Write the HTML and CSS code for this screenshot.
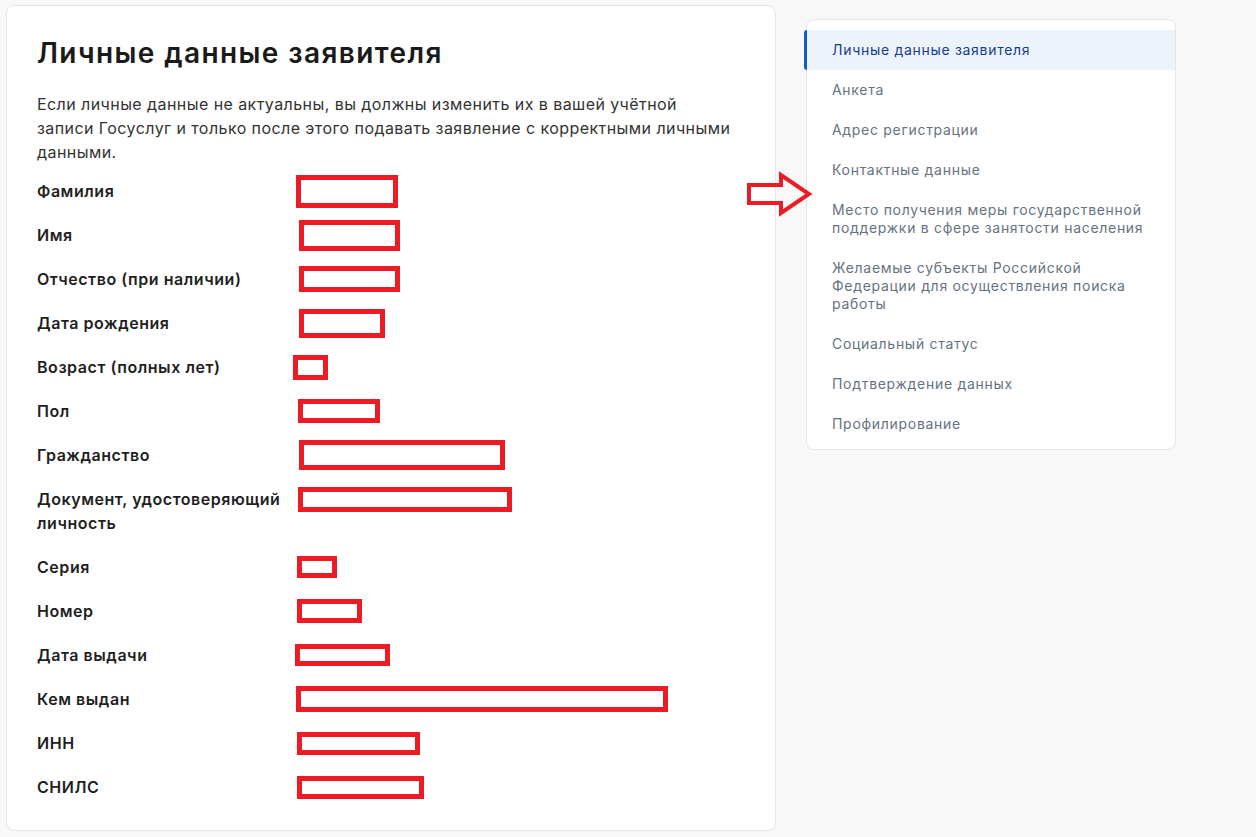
FILE: index.html
```html
<!DOCTYPE html>
<html lang="ru">
<head>
  <meta charset="UTF-8" />
  <title>Личные данные заявителя</title>
  <link rel="stylesheet" href="styles.css">
</head>
<body>
  <div class="page">
    <div class="card">
      <h1>Личные данные заявителя</h1>
      <p class="hint">Если личные данные не актуальны, вы должны изменить их в вашей учётной<br>записи Госуслуг и только после этого подавать заявление с корректными личными данными.</p>

      <div class="fields">
        <div class="label">Фамилия</div>
        <div class="value"><span class="mask" style="width:102px;height:33px;margin-left:0"></span></div>

        <div class="label">Имя</div>
        <div class="value"><span class="mask" style="width:101px;height:31px;margin-left:3px"></span></div>

        <div class="label">Отчество (при наличии)</div>
        <div class="value"><span class="mask" style="width:101px;height:26px;margin-left:3px"></span></div>

        <div class="label">Дата рождения</div>
        <div class="value"><span class="mask" style="width:86px;height:29px;margin-left:3px"></span></div>

        <div class="label">Возраст (полных лет)</div>
        <div class="value"><span class="mask" style="width:35px;height:25px;margin-left:-3px"></span></div>

        <div class="label">Пол</div>
        <div class="value"><span class="mask" style="width:82px;height:24px;margin-left:2px"></span></div>

        <div class="label">Гражданство</div>
        <div class="value"><span class="mask" style="width:206px;height:30px;margin-left:3px"></span></div>

        <div class="label">Документ, удостоверяющий личность</div>
        <div class="value"><span class="mask" style="width:214px;height:25px;margin-left:2px"></span></div>

        <div class="label">Серия</div>
        <div class="value"><span class="mask" style="width:40px;height:22px;margin-left:1px"></span></div>

        <div class="label">Номер</div>
        <div class="value"><span class="mask" style="width:65px;height:24px;margin-left:1px"></span></div>

        <div class="label">Дата выдачи</div>
        <div class="value"><span class="mask" style="width:95px;height:22px;margin-left:-1px"></span></div>

        <div class="label">Кем выдан</div>
        <div class="value"><span class="mask" style="width:372px;height:26px;margin-left:0"></span></div>

        <div class="label">ИНН</div>
        <div class="value"><span class="mask" style="width:123px;height:23px;margin-left:1px"></span></div>

        <div class="label">СНИЛС</div>
        <div class="value"><span class="mask" style="width:127px;height:23px;margin-left:1px"></span></div>
      </div>
    </div>

    <div class="side">
      <svg class="pointer" width="70" height="46" viewBox="0 0 70 46">
        <polygon points="4,14 36,14 36,4 64,23 36,42 36,32 4,32" fill="none" stroke="#ed1c24" stroke-width="4" stroke-linejoin="miter"/>
      </svg>
      <ul class="steps">
        <li class="active">Личные данные заявителя</li>
        <li>Анкета</li>
        <li>Адрес регистрации</li>
        <li>Контактные данные</li>
        <li>Место получения меры государственной поддержки в сфере занятости населения</li>
        <li>Желаемые субъекты Российской Федерации для осуществления поиска работы</li>
        <li>Социальный статус</li>
        <li>Подтверждение данных</li>
        <li>Профилирование</li>
      </ul>
    </div>
  </div>
</body>
</html>
```

FILE: styles.css
```css
body {
  margin: 0;
  font-family: Inter, "Open Sans", sans-serif;
  background-color: #f8f8f8;
  color: #1f1f1f;
}
.page {
  display: flex;
  align-items: flex-start;
  gap: 30px;
  padding: 5px 0 0 6px;
}
.card {
  box-sizing: border-box;
  width: 770px;
  height: 826px;
  background-color: #fff;
  border: 1px solid #e6e6e6;
  border-radius: 8px;
  padding: 29px 10px 0 30px;
}
h1 {
  margin: 0 0 21px;
  font-size: 28px;
  line-height: 36px;
  font-weight: 600;
  color: #1a1a1a;
  letter-spacing: 1.4px;
}
.hint {
  margin: 0 0 15px;
  font-size: 16px;
  line-height: 24px;
  color: #333;
  letter-spacing: 0.43px;
  max-width: 730px;
}
.fields {
  display: grid;
  grid-template-columns: 250px 1fr;
  column-gap: 9px;
  row-gap: 20px;
}
.label {
  font-size: 16px;
  line-height: 24px;
  font-weight: 600;
  letter-spacing: 0.55px;
  color: #1f1f1f;
}
.value {
  height: 24px;
  display: flex;
  align-items: center;
}
.mask {
  box-sizing: border-box;
  flex-shrink: 0;
  border: 5px solid #ed1c24;
  background-color: #fff;
}
.side {
  position: relative;
  margin-top: 14px;
}
.pointer {
  position: absolute;
  left: -61px;
  top: 152px;
}
.steps {
  list-style: none;
  margin: 0;
  padding: 10px 0 5px;
  width: 370px;
  box-sizing: border-box;
  background-color: #fff;
  border: 1px solid #e6e6e6;
  border-radius: 8px;
}
.steps li {
  position: relative;
  padding: 11px 26px 11px 25px;
  font-size: 14px;
  line-height: 18px;
  letter-spacing: 0.7px;
  color: #66727f;
}
.steps li.active {
  background-color: #edf3fb;
  color: #173d8f;
}
.steps li.active::before {
  content: "";
  position: absolute;
  left: -3px;
  top: 0;
  bottom: 0;
  width: 3px;
  border-radius: 3px 0 0 3px;
  background-color: #0d5fc7;
}
```
